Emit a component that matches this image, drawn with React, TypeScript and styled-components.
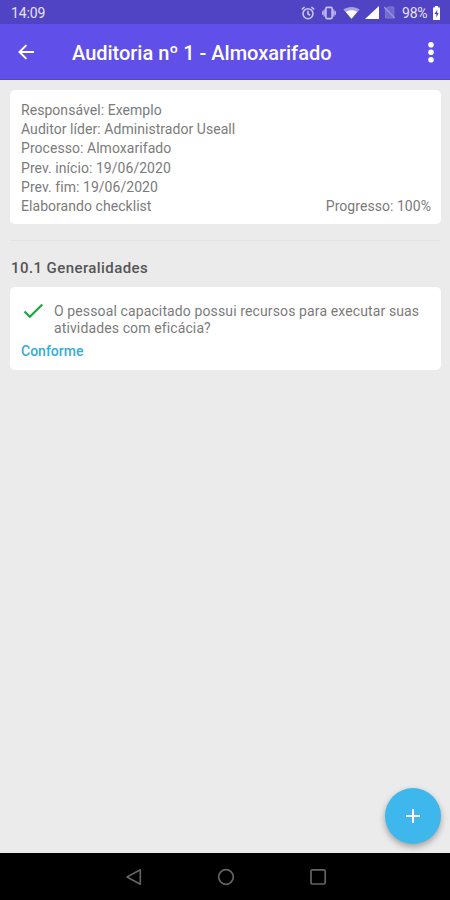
import React from "react";
import styled, { createGlobalStyle } from "styled-components";

const GlobalStyle = createGlobalStyle`
  * { box-sizing: border-box; }
  body { margin: 0; background: #ebebeb; }
`;

const Screen = styled.div`
  position: relative;
  display: flex;
  flex-direction: column;
  width: 450px;
  height: 900px;
  overflow: hidden;
  background: #ebebeb;
  font-family: Roboto, "Liberation Sans", sans-serif;
  color: #7b7b7b;
`;

const StatusBar = styled.div`
  display: flex;
  align-items: center;
  height: 24px;
  flex: none;
  padding: 1px 9px 0 11px;
  background: #5144c4;
  color: #e6e3fa;
  font-size: 14px;
  letter-spacing: -0.15px;
  line-height: 22px;
`;

const StatusIcons = styled.div`
  display: flex;
  align-items: center;
  margin-left: auto;
  svg { display: block; }
`;

const StatusIcon = styled.svg<{ $gap: number }>`
  margin-right: ${(p) => p.$gap}px;
`;

const Battery = styled.span`
  width: 26px;
  margin-right: 4px;
  font-size: 14px;
  letter-spacing: -0.2px;
  white-space: nowrap;
`;

const AppBar = styled.header`
  display: flex;
  align-items: center;
  height: 56px;
  flex: none;
  padding: 0 16px 0 18px;
  background: #604fe8;
  border-bottom: 1px solid #5444ce;
  color: #fff;
  svg { display: block; }
`;

const Title = styled.h1`
  flex: 1;
  margin: 0 0 0 38px;
  padding-top: 2px;
  font-size: 20px;
  font-weight: 500;
  line-height: 28px;
  letter-spacing: -0.02px;
  white-space: nowrap;
`;

const IconButton = styled.button`
  padding: 0;
  border: 0;
  background: none;
  color: inherit;
`;

const Content = styled.main`
  flex: 1;
  padding: 10px 9px 0 10px;
`;

const Card = styled.section`
  background: #fff;
  border-radius: 5px;
`;

const InfoCard = styled(Card)`
  height: 134px;
  padding: 11px 10px 0 11px;
`;

const InfoRow = styled.div`
  display: flex;
  justify-content: space-between;
  font-size: 14px;
  line-height: 19.2px;
  letter-spacing: 0.05px;
  white-space: nowrap;
`;

const Divider = styled.hr`
  height: 1px;
  margin: 16px 0 0;
  border: 0;
  background: #e3e3e3;
`;

const SectionTitle = styled.h2`
  margin: 17px 0 0 1px;
  font-size: 15px;
  font-weight: 500;
  line-height: 20px;
  letter-spacing: 0.42px;
  color: #555;
`;

const QuestionCard = styled(Card)`
  height: 83px;
  margin-top: 9px;
  padding: 15px 10px 0 11px;
`;

const Question = styled.div`
  display: flex;
  svg { flex: none; margin: 1px 8px 0 2px; }
`;

const QuestionText = styled.p`
  margin: 1px 0 0;
  font-size: 14px;
  line-height: 16.5px;
  letter-spacing: 0.12px;
  white-space: nowrap;
`;

const Result = styled.div`
  margin-top: 6px;
  font-size: 14px;
  font-weight: 500;
  line-height: 18px;
  color: #36add7;
`;

const Fab = styled.button`
  position: absolute;
  right: 9px;
  bottom: 56px;
  display: flex;
  align-items: center;
  justify-content: center;
  width: 56px;
  height: 56px;
  padding: 0;
  border: 0;
  border-radius: 50%;
  background: #3eb8ec;
  box-shadow: 0 3px 6px rgba(0, 0, 0, 0.32);
`;

const NavBar = styled.nav`
  display: flex;
  align-items: center;
  justify-content: space-between;
  height: 47px;
  flex: none;
  padding: 0 123px 0 125px;
  background: #000;
`;

const details = [
  ["Responsável: Exemplo"],
  ["Auditor líder: Administrador Useall"],
  ["Processo: Almoxarifado"],
  ["Prev. início: 19/06/2020"],
  ["Prev. fim: 19/06/2020"],
  ["Elaborando checklist", "Progresso: 100%"],
];

export default function App() {
  return (
    <Screen>
      <GlobalStyle />
      <StatusBar>
        <span>14:09</span>
        <StatusIcons>
          <StatusIcon $gap={7} width="14" height="14" viewBox="0 0 14 14" fill="none" stroke="#c9c3f0" strokeWidth="1.6">
            <circle cx="7" cy="7.7" r="5" />
            <path d="M7 4.8v3.2l2.2 1.3M.8 3.4 3.6 1M13.2 3.4 10.4 1" />
          </StatusIcon>
          <StatusIcon $gap={7} width="14" height="14" viewBox="0 0 14 14" fill="none" stroke="#c9c3f0" strokeWidth="1.6">
            <rect x="3.9" y="1.4" width="6.2" height="11.2" rx="1" />
            <path d="M2.2 3.6v6.8M.7 5.2v3.6M11.8 3.6v6.8M13.3 5.2v3.6" strokeWidth="1.2" />
          </StatusIcon>
          <StatusIcon $gap={5} width="17" height="13" viewBox="0 0 17 13">
            <path d="M.3 3.5C5 .1 12 .1 16.7 3.5L8.5 12.7z" fill="#aaa2e3" />
            <path d="M2.8 5.8c3.5-2.2 7.9-2.2 11.4 0L8.5 12.7z" fill="#fff" />
          </StatusIcon>
          <StatusIcon $gap={5} width="14" height="13" viewBox="0 0 14 13">
            <path d="M14 0v13H0z" fill="#fff" />
          </StatusIcon>
          <StatusIcon $gap={7} width="11" height="13" viewBox="0 0 11 13" fill="none" stroke="#8278d5">
            <path d="M3.8 1h6v11h-8.3V3.4z" fill="#7469ce" />
            <path d="m0 1 10.8 11" strokeWidth="1.5" stroke="#9a91df" />
          </StatusIcon>
          <Battery>98%</Battery>
          <svg width="9" height="14" viewBox="0 0 9 14">
            <path d="M2.8 0h3.4v1.5H8V14H1V1.5h1.8z" fill="#fff" />
            <path d="M5.2 3.8 2.5 8h1.8v3.6L6.7 7H5.2z" fill="#5144c4" />
          </svg>
        </StatusIcons>
      </StatusBar>
      <AppBar>
        <IconButton aria-label="Voltar">
          <svg width="16" height="16" viewBox="0 0 16 16" fill="none" stroke="#fff" strokeWidth="2">
            <path d="M16 8H1.7M8.4 1.1 1.5 8l6.9 6.9" />
          </svg>
        </IconButton>
        <Title>Auditoria nº 1 - Almoxarifado</Title>
        <IconButton aria-label="Mais opções">
          <svg width="6" height="22" viewBox="0 0 6 22" fill="#fff">
            <circle cx="3" cy="3.7" r="2.8" />
            <circle cx="3" cy="11.2" r="2.8" />
            <circle cx="3" cy="18.7" r="2.8" />
          </svg>
        </IconButton>
      </AppBar>
      <Content>
        <InfoCard>
          {details.map(([label, extra]) => (
            <InfoRow key={label}>
              <span>{label}</span>
              {extra && <span>{extra}</span>}
            </InfoRow>
          ))}
        </InfoCard>
        <Divider />
        <SectionTitle>10.1 Generalidades</SectionTitle>
        <QuestionCard>
          <Question>
            <svg width="23" height="17" viewBox="0 0 23 17" fill="none" stroke="#16a83b" strokeWidth="2.1">
              <path d="m1.5 8.5 5.3 5.2L19.3 1.5" />
            </svg>
            <QuestionText>
              O pessoal capacitado possui recursos para executar suas
              <br />
              atividades com eficácia?
            </QuestionText>
          </Question>
          <Result>Conforme</Result>
        </QuestionCard>
      </Content>
      <Fab aria-label="Adicionar">
        <svg width="14" height="14" viewBox="0 0 14 14" stroke="#fff" strokeWidth="2">
          <path d="M7 0v14M0 7h14" />
        </svg>
      </Fab>
      <NavBar>
        <svg width="18" height="18" viewBox="0 0 18 18" fill="none" stroke="#646464" strokeWidth="1.6" strokeLinejoin="round">
          <path d="M15.3 1.8v14.4L2 9z" />
        </svg>
        <svg width="18" height="18" viewBox="0 0 18 18" fill="none" stroke="#646464" strokeWidth="1.7">
          <circle cx="9" cy="9" r="7.3" />
        </svg>
        <svg width="18" height="18" viewBox="0 0 18 18" fill="none" stroke="#646464" strokeWidth="1.7">
          <rect x="2" y="1.8" width="14.2" height="14.2" rx="1.5" />
        </svg>
      </NavBar>
    </Screen>
  );
}
